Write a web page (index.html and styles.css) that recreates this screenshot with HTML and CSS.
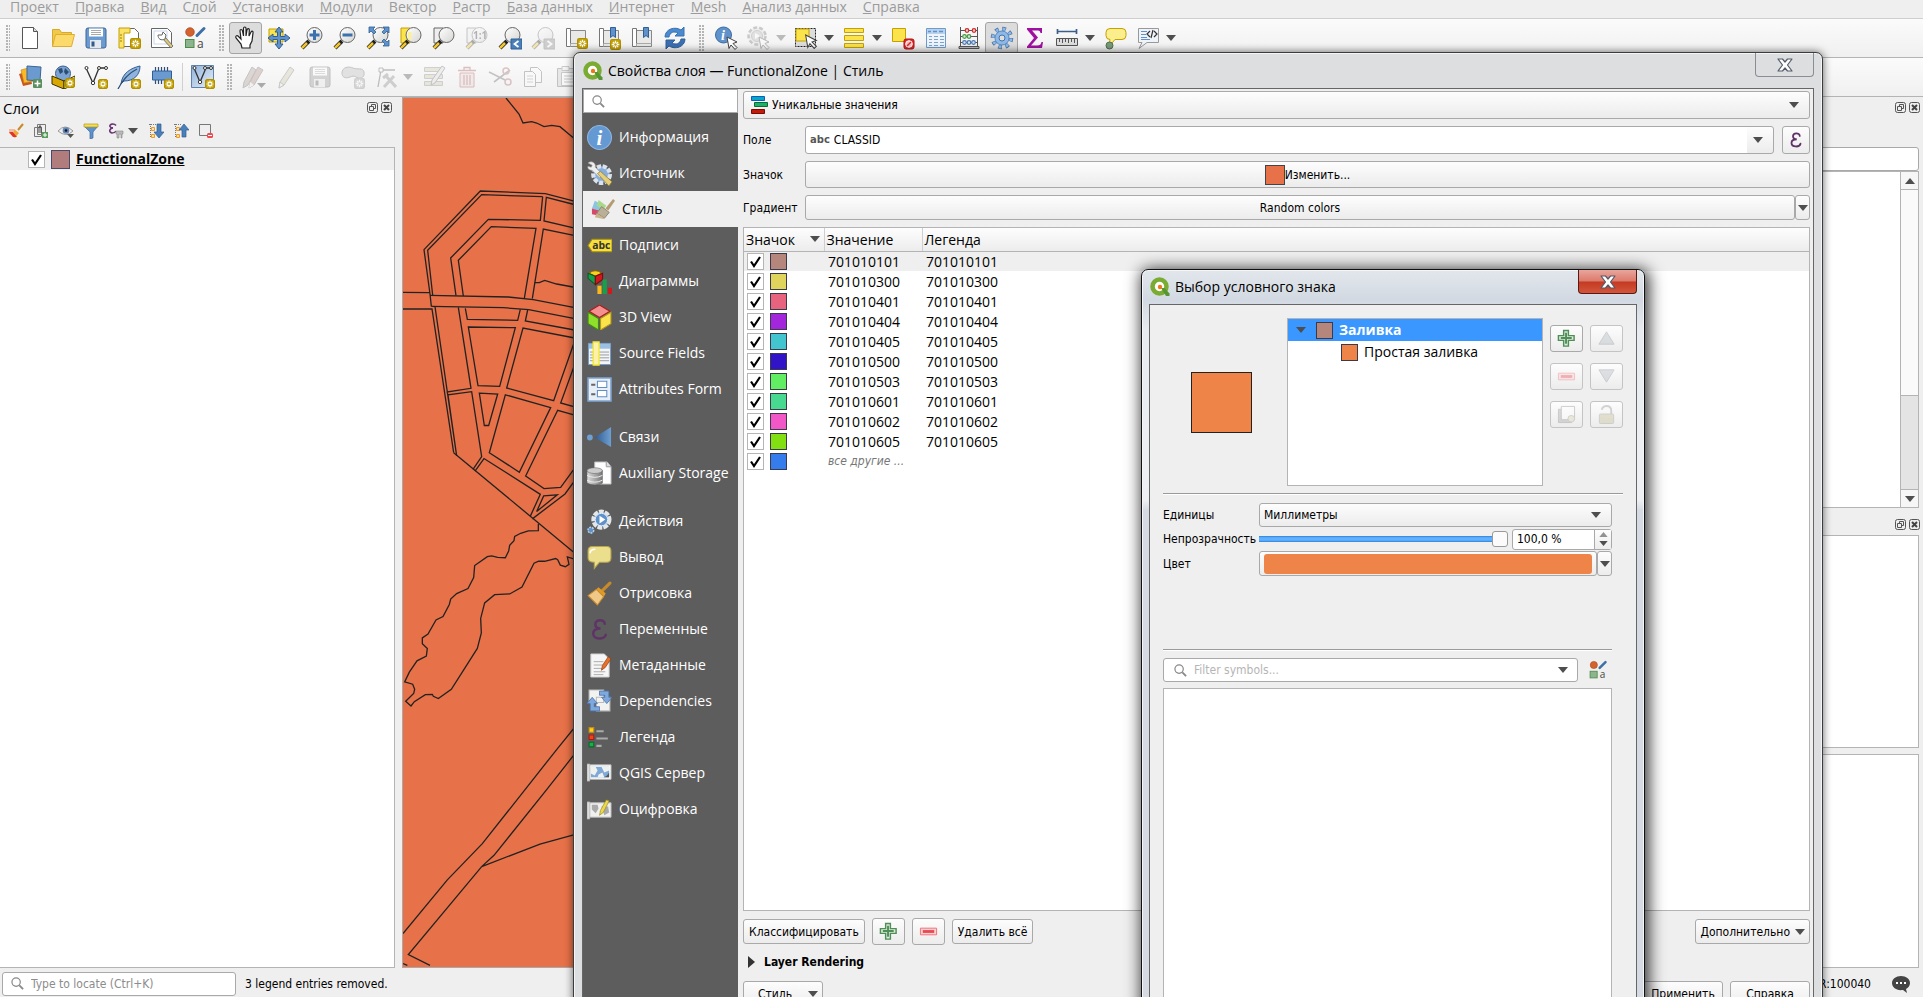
FILE: index.html
```html
<!DOCTYPE html>
<html lang="ru">
<head>
<meta charset="utf-8">
<title>QGIS</title>
<link rel="stylesheet" href="styles.css">
</head>
<body>
<svg class="defs" aria-hidden="true">
  <defs>
    <linearGradient id="g-lens" x1="0" y1="0" x2="1" y2="1"><stop offset="0" stop-color="#fff"/><stop offset="1" stop-color="#d4d6d2"/></linearGradient>
    <linearGradient id="g-cyl" x1="0" y1="0" x2="1" y2="0"><stop offset="0" stop-color="#ddd"/><stop offset="1" stop-color="#777"/></linearGradient>
    <linearGradient id="g-blue" x1="0" y1="0" x2="1" y2="1"><stop offset="0" stop-color="#8fb3dc"/><stop offset="1" stop-color="#e8eef6"/></linearGradient>
    <linearGradient id="g-tri" x1="0" y1="0" x2="1" y2="0"><stop offset="0" stop-color="#2f5a90"/><stop offset="1" stop-color="#6fa0d2"/></linearGradient>
  </defs>
  <symbol id="star" viewBox="0 0 10 10"><rect x=".5" y=".5" width="9" height="9" rx="1.5" fill="#c4a000" stroke="#b08f00"/><path d="M5 1.5v7M1.5 5h7M2.6 2.6l4.8 4.8M7.4 2.6L2.6 7.4" stroke="#fff" stroke-width="1.2"/><circle cx="5" cy="5" r="1.1" fill="#c4a000"/></symbol>
  <symbol id="down" viewBox="0 0 10 6"><path d="M0 0h10L5 6z" fill="#4e4e4e"/></symbol>
  <symbol id="qgis" viewBox="0 0 20 20"><circle cx="9.500" cy="9.500" r="7" fill="#fff" stroke="#7aab32" stroke-width="4.500"/><path d="M11 11h3.500l5 5.500v2.500h-3.500z" fill="#589632"/><circle cx="10" cy="10" r="2.200" fill="#ee7913"/></symbol>
  <symbol id="search" viewBox="0 0 14 14"><circle cx="5.500" cy="5.500" r="4.500" fill="none" stroke="#888" stroke-width="1.300"/><path d="M9 9l4 4" stroke="#888" stroke-width="2"/></symbol>
  <symbol id="new" viewBox="0 0 24 24"><path d="M4.500 1.500h11l4 4v17h-15z" fill="#fff" stroke="#555"/><path d="M15.500 1.500v4h4" fill="#ddd" stroke="#555"/></symbol>
  <symbol id="folder" viewBox="0 0 24 24"><path d="M1.500 20.500v-17h7l2 3h10v3" fill="#f0c94b" stroke="#d9a92a"/><path d="M1.500 20.500l3-12h19l-3 12z" fill="#fbd96b" stroke="#dfae2d"/></symbol>
  <symbol id="save" viewBox="0 0 24 24"><rect x="2" y="2" width="20" height="20" rx="2" fill="#6b9ad0" stroke="#3b6696"/><path d="M5 2.500h14v8H5z" fill="#fff"/><path d="M7 4.500h10M7 6.500h10M7 8.500h10" stroke="#aaa"/><path d="M6 14h11v8H6z" fill="#e4e9ef"/><path d="M7.500 15.500h3v5h-3z" fill="#2f5a8a"/></symbol>
  <symbol id="layout" viewBox="0 0 24 24"><path d="M2.500 2.500h15l4 4v14h-19z" fill="#fff" stroke="#666"/><path d="M2 2h11v5H7v15H2z" fill="#fbe36a" stroke="#c4a000"/><path d="M5 9H3M5 12H3M5 15H3" stroke="#9a7d00"/><use href="#star" x="13" y="12" width="11" height="11"/></symbol>
  <symbol id="wrenchdoc" viewBox="0 0 24 24"><path d="M1.500 2.500h16l4 4v15h-20z" fill="#fff" stroke="#666"/><path d="M4 5h13v13H4z" fill="none" stroke="#c9d6ee"/><path d="M12 12l9 10 2-2-8-9z" fill="#dcc873" stroke="#777"/><path d="M8 9c0 4 3 6 7 4l1-4-3-3-1 3-2 0z" fill="#fff" stroke="#666"/></symbol>
  <symbol id="style" viewBox="0 0 24 24"><circle cx="7" cy="6" r="4.300" fill="#d4622f" stroke="#a8441a" stroke-width=".7"/><rect x="2.500" y="13.500" width="8.500" height="8" fill="#8db58d" stroke="#4e8a4e"/><path d="M14 9.500l7-7" stroke="#3e6fa6" stroke-width="3" stroke-linecap="round"/></symbol>
  <symbol id="hand" viewBox="0 0 24 24"><path d="M8 22l-1-4-5-6c-1-2 1-3 2-2l3 3-1-8c0-2 2-2 2.500 0l1 5V2.500c0-2 2.500-2 2.500 0V10l1-6c.5-2 2.500-1.500 2.300 0L15 10l2-4c1-1.500 2.500-.5 2 1l-1 8-2 4v3z" fill="#fff" stroke="#222" stroke-width="1.200"/></symbol>
  <symbol id="pan" viewBox="0 0 24 24"><path d="M2 3h14v13H2z" fill="#fbe34c" stroke="#c4a000"/><path d="M12 1l4 5h-2.500v4.500H18V8l5 4-5 4v-2.500h-4.500V18H16l-4 5-4-5h2.500v-4.500H6V16l-5-4 5-4v2.500h4.500V6H8z" fill="#5f92cb" stroke="#2f5f96"/></symbol>
  <symbol id="lens" viewBox="0 0 24 24"><path d="M9 15l-7 7" stroke="#222" stroke-width="4"/><path d="M7 17l-5 5" stroke="#f3c62b" stroke-width="2.500"/><circle cx="14.500" cy="9" r="7.500" fill="url(#g-lens)" stroke="#666"/></symbol>
  <symbol id="zin" viewBox="0 0 24 24"><use href="#lens"/><path d="M14.500 4v10M9.500 9h10" stroke="#3c71ad" stroke-width="3"/></symbol>
  <symbol id="zout" viewBox="0 0 24 24"><use href="#lens"/><path d="M9.500 9h10" stroke="#3c71ad" stroke-width="3"/></symbol>
  <symbol id="zfull" viewBox="0 0 24 24"><use href="#lens"/><path d="M3 1h6L7 3l3 3-2 2-3-3-2 2zM23 1h-6l2 2-3 3 2 2 3-3 2 2zM23 20h-6l2-2-3-3 2-2 3 3 2-2z" fill="#5f92cb" stroke="#2f5f96" stroke-width=".8"/></symbol>
  <symbol id="zsel" viewBox="0 0 24 24"><path d="M2 2h9v15H2z" fill="#fbe34c" stroke="#c4a000"/><use href="#lens"/><path d="M8.500 6h4v8h-3z" fill="#fbf0a0"/></symbol>
  <symbol id="zlay" viewBox="0 0 24 24"><path d="M2 2h9v15H2z" fill="#eee" stroke="#666"/><use href="#lens"/></symbol>
  <symbol id="zlast" viewBox="0 0 24 24"><use href="#lens"/><path d="M13 13h11v10H13z" fill="#4b7fb9" stroke="#2f5f96"/><path d="M20.500 15l-4 3 4 3" fill="none" stroke="#fff" stroke-width="1.800"/></symbol>
  <symbol id="znext" viewBox="0 0 24 24"><use href="#lens"/><path d="M13 13h11v10H13z" fill="#888" stroke="#666"/><path d="M16.500 15l4 3-4 3" fill="none" stroke="#fff" stroke-width="1.800"/></symbol>
  <symbol id="map" viewBox="0 0 24 24"><path d="M4 4.500h17.500v16H4z" fill="#e9e9e7" stroke="#888"/><path d="M2.500 2.500h4v18h-4z" fill="#fff" stroke="#777"/><path d="M6.500 20.500v-3h15" fill="none" stroke="#aaa"/></symbol>
  <symbol id="mapnew" viewBox="0 0 24 24"><use href="#map"/><use href="#star" x="13" y="12" width="11" height="11"/></symbol>
  <symbol id="bm" viewBox="0 0 24 24"><use href="#map"/><path d="M13.500 1.500h5v10l-2.500-2-2.500 2z" fill="#5f92cb" stroke="#2f5f96"/></symbol>
  <symbol id="bmnew" viewBox="0 0 24 24"><use href="#bm"/><use href="#star" x="13" y="13" width="11" height="11"/></symbol>
  <symbol id="refresh" viewBox="0 0 24 24"><path d="M2 11C2 3 12 0 18 4l3-3v9h-9l3-3c-4-2-8-1-9 4z" fill="#4b8ad0" stroke="#3a70b0"/><path d="M22 13c0 8-10 11-16 7l-3 3v-9h9l-3 3c4 2 8 1 9-4z" fill="#3b6fb2" stroke="#2f5f96"/></symbol>
  <symbol id="cursor" viewBox="0 0 12 14"><path d="M1 1l10 5-4 1.500 4 4-2 2-4-4.500-2 3.500z" fill="#fff" stroke="#444"/></symbol>
  <symbol id="gear" viewBox="0 0 24 24"><circle cx="12" cy="12" r="9" fill="none" stroke="#4473a8" stroke-width="4.500" stroke-dasharray="3.500 3.570"/><circle cx="12" cy="12" r="9" fill="none" stroke="#8db8e8" stroke-width="3" stroke-dasharray="2.500 4.570" stroke-dashoffset="-.5"/><circle cx="12" cy="12" r="7" fill="#8db8e8" stroke="#5a8cc4"/><circle cx="12" cy="12" r="3" fill="#dedede" stroke="#4473a8"/></symbol>
  <symbol id="action" viewBox="0 0 24 24"><circle cx="11" cy="10" r="8.500" fill="#ddd" stroke="#777" stroke-width="2.500" stroke-dasharray="4 2"/><circle cx="11" cy="10" r="5.500" fill="#bbb" stroke="#888"/><path d="M9 7l5 3-5 3z" fill="#fff"/><use href="#cursor" x="12" y="10" width="12" height="14"/></symbol>
  <symbol id="select" viewBox="0 0 24 24"><path d="M1.500 2.500h20v18h-20z" fill="#ddd" stroke="#222" stroke-dasharray="2 1"/><path d="M2 3h13v12H2z" fill="#fbe34c" stroke="#c4a000"/><use href="#cursor" x="10" y="8" width="14" height="15"/></symbol>
  <symbol id="bars" viewBox="0 0 24 24"><path d="M2.500 2.500h19v4h-19zM2.500 9.500h19v5h-19zM2.500 17.500h19v4h-19z" fill="#fbe34c" stroke="#c4a000"/></symbol>
  <symbol id="desel" viewBox="0 0 24 24"><path d="M1.500 2.500h13v13h-13z" fill="#fbe34c" stroke="#c4a000"/><rect x="13" y="13" width="10" height="10" rx="2" fill="#dd2a2a" stroke="#b01010"/><circle cx="18" cy="18" r="3.300" fill="#f6c0c0" stroke="#fff"/><path d="M16 20l4-4" stroke="#dd2a2a" stroke-width="1.500"/></symbol>
  <symbol id="table" viewBox="0 0 24 24"><path d="M2.500 2.500h19v19h-19z" fill="#eef4fa" stroke="#6f9bcb"/><path d="M3 3h18v5H3z" fill="#b9d2ee"/><path d="M4 5.500h3M9 5.500h4M15 5.500h4" stroke="#5f92cb" stroke-width="1.500"/><path d="M5 10.500h3M10 10.500h4M16 10.500h4M5 13.500h3M10 13.500h4M16 13.500h4M5 16.500h3M10 16.500h4M16 16.500h4M5 19.500h3M10 19.500h4M16 19.500h4" stroke="#7aa3d0"/></symbol>
  <symbol id="abacus" viewBox="0 0 24 24"><path d="M3.500 1v20M20.500 1v20M4 4.500h16M4 10.500h16M4 16.500h16" stroke="#555" fill="none"/><path d="M2 20.500h20v2H2z" fill="#bbb" stroke="#555"/><g stroke-width="1.200"><g fill="#f6caca" stroke="#d02a2a"><circle cx="10" cy="4.500" r="1.800"/><circle cx="17" cy="4.500" r="1.800"/></g><g fill="#cfe8cf" stroke="#4a9a4a"><circle cx="7.500" cy="10.500" r="1.800"/><circle cx="12" cy="10.500" r="1.800"/></g><g fill="#d5e4f5" stroke="#4a78b0"><circle cx="7.500" cy="16.500" r="1.800"/><circle cx="12" cy="16.500" r="1.800"/><circle cx="16.500" cy="16.500" r="1.800"/></g></g></symbol>
  <symbol id="sigma" viewBox="0 0 24 24"><path d="M4 2h15v5h-1.500c-.5-2-1-2.500-4-2.500H9l6 7-7 8h6c3 0 4-1 4.500-3.500H20L19 22H4v-1.500l7-8.500L4 3.500z" fill="#a010a0"/></symbol>
  <symbol id="ruler" viewBox="0 0 24 24"><path d="M2 5.500h20M2.500 3v5M21.500 3v5" stroke="#3b5f8a" stroke-width="1.700"/><path d="M1.500 12.500h21v7h-21z" fill="#ddd" stroke="#555"/><path d="M4.500 13v3M7.500 13v4M10.500 13v3M13.500 13v4M16.500 13v3M19.500 13v4" stroke="#555"/></symbol>
  <symbol id="bubble" viewBox="0 0 24 24"><path d="M6 2.500h12q4 0 4 4v3q0 4-4 4h-7l-6 7 1-7q-4 0-4-4v-3q0-4 4-4z" fill="#fbee8c" stroke="#c4a000"/></symbol>
  <symbol id="tip" viewBox="0 0 24 24"><use href="#bubble"/><circle cx="5.500" cy="19.500" r="3.500" fill="#7a9c7a" stroke="#4e6e4e"/></symbol>
  <symbol id="annot" viewBox="0 0 24 24"><path d="M2.500 2.500h20v14H11l-8 6 3-6H2.500z" fill="#f0f4f8" stroke="#999"/><path d="M5 5.500h6M5 8.500h5M5 11.500h6M5 13.500h9" stroke="#5f92cb" stroke-width="1.200"/><path d="M14 5l-3 3 3 3M18 5l3 3-3 3M17 4l-2 8" fill="none" stroke="#333" stroke-width="1.200"/></symbol>
  <symbol id="addlayer" viewBox="0 0 24 24"><path d="M1 9l10-3 3 13-9 2z" fill="#c8571e"/><path d="M3 5l11-3 2 14-10 2z" fill="#fbb829" stroke="#c98a10" stroke-width=".7"/><path d="M9 1l14 1-1 14-13-1z" fill="#6b9ad0" stroke="#3b6696"/><rect x="15" y="14" width="9" height="9" rx="1" fill="#5a8f5e"/><path d="M19.500 15.500v6M16.500 18.500h6" stroke="#fff" stroke-width="1.500"/></symbol>
  <symbol id="globebox" viewBox="0 0 24 24"><circle cx="12" cy="8.500" r="7.500" fill="#7ba4d4" stroke="#3b5f8a"/><path d="M7 4l4-1 1 4-3 2zM14 3l4 4-3 3-2-3z" fill="#2d4d73"/><path d="M1 11l12 5v8L1 19z" fill="#d9a800" stroke="#3d3000"/><path d="M13 16l11-5v8l-11 5z" fill="#fff25c" stroke="#3d3000"/><use href="#star" x="14" y="13" width="10" height="10"/></symbol>
  <symbol id="vnew" viewBox="0 0 24 24"><path d="M2 3l7 15 6-15h8" fill="none" stroke="#333" stroke-width="1.300"/><g fill="#fff" stroke="#333"><circle cx="2.500" cy="3" r="1.500"/><circle cx="15" cy="3" r="1.500"/><circle cx="22" cy="3" r="1.500"/><circle cx="9" cy="18" r="1.700"/></g><use href="#star" x="14" y="14" width="10" height="10"/></symbol>
  <symbol id="feather" viewBox="0 0 24 24"><path d="M4 19C5 8 14 3 23 1c0 9-6 15-16 15z" fill="#8fb3dc" stroke="#2f5f96"/><path d="M1 24C6 14 12 8 20 4" fill="none" stroke="#2f4f76" stroke-width="1.300"/><use href="#star" x="14" y="14" width="10" height="10"/></symbol>
  <symbol id="chip" viewBox="0 0 24 24"><path d="M5.500 2v17M8.500 2v17M11.500 2v17M14.500 2v17M17.500 2v17" stroke="#2f4f76" stroke-width="1.200"/><path d="M2.500 6h19v9h-19z" fill="#6b9ad0" stroke="#2f5f96"/><use href="#star" x="14" y="14" width="10" height="10"/></symbol>
  <symbol id="vbox" viewBox="0 0 24 24"><path d="M.5.500h22v22H.500z" fill="url(#g-blue)" stroke="#5f82aa"/><path d="M3 3l6 14 6-14h6" fill="none" stroke="#333" stroke-width="1.300"/><g fill="#fff" stroke="#333"><circle cx="3.500" cy="3" r="1.500"/><circle cx="14" cy="3" r="1.500"/><circle cx="20" cy="3" r="1.500"/><circle cx="9" cy="17" r="1.700"/></g><use href="#star" x="14" y="14" width="10" height="10"/></symbol>
  <symbol id="pencil" viewBox="0 0 24 24"><path d="M4 23l1-6L15 2l4 3L9 20z" fill="#cfcaa8" stroke="#777"/><path d="M4 23l1-6 4 3z" fill="#eee" stroke="#777"/></symbol>
  <symbol id="pencils" viewBox="0 0 24 24"><path d="M1 23l1-6L10 2l4 3L6 20z" fill="#b09a92" stroke="#666"/><path d="M7 23l1-6L16 2l5 3-9 15z" fill="#b08a82" stroke="#666"/><path d="M7 23l1-6 4 3z" fill="#eee"/><path d="M15 18h9l-4.500 5z" fill="#222"/></symbol>
  <symbol id="blob" viewBox="0 0 24 24"><path d="M1 8C1 2 8 1 12 3s10-1 11 4-3 7-6 6-3-3-8-1-8 0-8-4z" fill="#bbb" stroke="#666"/><use href="#star" x="13" y="13" width="11" height="11"/></symbol>
  <symbol id="nodes" viewBox="0 0 24 24"><path d="M5 22L8 5h14" fill="none" stroke="#555" stroke-width="1.300"/><path d="M6 3h4v4H6z" fill="#fff" stroke="#555"/><path d="M11 22L21 11M12 10l11 12M10 13l5-4" stroke="#888" stroke-width="3"/></symbol>
  <symbol id="editrows" viewBox="0 0 24 24"><path d="M2.500 2.500h18v4h-18zM2.500 9.500h18v4h-18zM2.500 16.500h18v4h-18z" fill="#cfcaa8" stroke="#888"/><path d="M9 20l1-5L20 1l3 2-10 15z" fill="#ddd" stroke="#666"/></symbol>
  <symbol id="trash" viewBox="0 0 24 24"><path d="M5 8h14v14H5z" fill="#ecd6d6" stroke="#a55"/><path d="M3 5.500h18M9 5V2.500h6V5M9 10v10M12 10v10M15 10v10" fill="none" stroke="#a55" stroke-width="1.300"/></symbol>
  <symbol id="cut" viewBox="0 0 24 24"><path d="M1 7l16 8M6 17L22 5" stroke="#666" stroke-width="1.600"/><circle cx="20" cy="17" r="3" fill="none" stroke="#a66" stroke-width="1.500"/><circle cx="18" cy="6" r="3" fill="none" stroke="#a66" stroke-width="1.500"/></symbol>
  <symbol id="copy" viewBox="0 0 24 24"><path d="M9.500 2.500h7l4 4v11h-11z" fill="#fff" stroke="#666"/><path d="M3.500 6.500h8l3 3v12h-11z" fill="#fff" stroke="#666"/><path d="M6 11h6M6 14h6M6 17h6" stroke="#999"/></symbol>
  <symbol id="paste" viewBox="0 0 24 24"><path d="M3.500 3.500h17v18h-17z" fill="#ccc" stroke="#666"/><path d="M7.500 7.500h14v13h-14z" fill="#fff" stroke="#777"/><path d="M8 1.500h7v4H8zM10 11h9M10 14h9M10 17h9" fill="#eee" stroke="#777"/></symbol>
  <symbol id="brush" viewBox="0 0 16 16"><path d="M10 7l5-6" stroke="#c98a2a" stroke-width="2"/><path d="M6 6l5 4-4 5-6-5z" fill="#f0a638"/><path d="M1 9l4 5 4 0-6-7z" fill="#d33"/><path d="M1 6h5v3H1z" fill="#f4b9a0"/></symbol>
  <symbol id="addgroup" viewBox="0 0 16 16"><path d="M1.500 4.500h7v9h-7zM4.500 1.500h8v10h-8z" fill="none" stroke="#777"/><path d="M8 10V4q-1-3-2 0v6" fill="none" stroke="#444"/><rect x="9" y="9" width="6" height="6" fill="#5a9a5a"/><path d="M12 10v4M10 12h4" stroke="#fff"/></symbol>
  <symbol id="eye" viewBox="0 0 16 16"><path d="M0 8q7-8 15 0-7 7-15 0z" fill="#eee" stroke="#999"/><circle cx="8" cy="7.500" r="3.300" fill="#5f86b5"/><circle cx="8" cy="7.500" r="1.300" fill="#112"/><path d="M9 11h7l-3.500 4z" fill="#555"/></symbol>
  <symbol id="funnel" viewBox="0 0 16 16"><path d="M1 3h14l-5 6v6l-3 1V9z" fill="#5f92cb" stroke="#3b6ba5" stroke-width=".7"/><path d="M1 1h14v3H1z" fill="#f5de52" stroke="#b59a1a" stroke-width=".7"/></symbol>
  <symbol id="epsf" viewBox="0 0 16 16"><path d="M8 2.500C6 0 1 1 2 3.500c.5 1.300 2 1.400 3 1.400C2 5 0 9 4 10q3 0 4-2" fill="none" stroke="#6a3574" stroke-width="1.600"/><path d="M8 8h7v3h-1v4h-1v-4h-2v4h-2v-4h-1z" fill="#bbb" stroke="#888" stroke-width=".6"/></symbol>
  <symbol id="expand" viewBox="0 0 16 16"><path d="M1 1.500h7M2.500 1v13" stroke="#777" stroke-dasharray="1 1"/><path d="M3.500 4.500h3v3h-3zM3.500 11.500h3v3h-3z" fill="#ffe0b0" stroke="#f09a20"/><path d="M9 1h4v8h3l-5 6-5-6h3z" fill="#4b7fb9" stroke="#2f5f96" stroke-width=".7"/></symbol>
  <symbol id="collapse" viewBox="0 0 16 16"><path d="M1 1.500h7M2.500 1v13" stroke="#777" stroke-dasharray="1 1"/><path d="M3.500 4.500h3v3h-3zM3.500 11.500h3v3h-3z" fill="#ffe0b0" stroke="#f09a20"/><path d="M9 14h4V7h3l-5-6-5 6h3z" fill="#4b7fb9" stroke="#2f5f96" stroke-width=".7"/></symbol>
  <symbol id="remove" viewBox="0 0 16 16"><path d="M1.500 1.500h11v11h-11z" fill="none" stroke="#777"/><rect x="9" y="10" width="6" height="5" rx="1.500" fill="#ee4a50"/><path d="M10 12.500h4" stroke="#fff"/></symbol>
  <symbol id="float" viewBox="0 0 11 11"><rect x=".5" y=".5" width="10" height="10" rx="2" fill="#eee" stroke="#555"/><path d="M4.500 2.500h4v4h-4z" fill="none" stroke="#555"/><path d="M2.500 4.500h4v4h-4z" fill="#eee" stroke="#555"/></symbol>
  <symbol id="close" viewBox="0 0 11 11"><rect x=".5" y=".5" width="10" height="10" rx="2" fill="#eee" stroke="#555"/><path d="M3 3l5 5M8 3L3 8" stroke="#444" stroke-width="2"/></symbol>
  <symbol id="winx" viewBox="0 0 16 14"><path d="M1 1h4.500L8 4l2.500-3H15l-4.500 6L15 13h-4.500L8 10l-2.500 3H1l4.500-6z" fill="#fff" stroke="#555a68" stroke-width="1.200" stroke-linejoin="round"/></symbol>
  <symbol id="plus" viewBox="0 0 20 20"><path d="M7 1.500h5v5.500h6v5h-6v6H7v-6H1.500V7H7z" fill="#dcebdc" stroke="#4f8f57" stroke-width="1.500"/><path d="M9.500 4v11.500M4 9.500h11.500" stroke="#4f8f57" stroke-width="2"/></symbol>
  <symbol id="minus" viewBox="0 0 20 20"><path d="M1.500 6.500h17v7h-17z" fill="#fbd0d0" stroke="#f07078"/><path d="M4 10h12" stroke="#e64a55" stroke-width="3"/></symbol>
  <symbol id="s-src" viewBox="0 0 24 24"><circle cx="14" cy="13" r="8" fill="#87aedb" stroke="#dde3ea" stroke-width="4" stroke-dasharray="4 1.500"/><path d="M1 2c3-3 8 0 7 4l7 7-3 3-7-7C2 9 0 7 1 5l3 1 1-2z" fill="#eee" stroke="#999" stroke-width=".6"/><path d="M10 12l3-2 11 10-3 4z" fill="#e6cf7a" stroke="#8d7a30" stroke-width=".7"/></symbol>
  <symbol id="s-style" viewBox="0 0 26 24"><path d="M5 3l8 4-4 7-7-3z" fill="#8ac6e2"/><path d="M9 2l8 6-3 4-7-4z" fill="#a8d88a"/><path d="M2 11l7 2 4 6-11-2z" fill="#d8486a"/><path d="M16 11l8-10 2 2-7 10z" fill="#b59a72"/><path d="M12 9l8 6-5 6-8-5z" fill="#bab098" stroke="#8e8570"/><path d="M7 16l8 5-1 1-9-2z" fill="#c8b78e"/></symbol>
  <symbol id="s-diag" viewBox="0 0 24 24"><path d="M8 7L2 4a8 7 0 0 1 12 0z" fill="#fbd21a" stroke="#8a6500"/><path d="M8 7L1 4v5l7 6z" fill="#17a04a" stroke="#0b5a28"/><path d="M8 7l7-3v6l-7 5z" fill="#d1181e" stroke="#7a0a0e"/><path d="M10 16h4v8h-4z" fill="#fbb81a"/><path d="M15 10h4v14h-4z" fill="#17a04a"/><path d="M20 18h4v6h-4z" fill="#d1181e"/></symbol>
  <symbol id="s-3d" viewBox="0 0 24 24"><path d="M12 0l10 6-10 6L2 6z" fill="#f39090" stroke="#b01818"/><path d="M1 7l10 6v11L1 18z" fill="#8ee02a" stroke="#3f8a10"/><path d="M13 13l10-6v11l-10 6z" fill="#fbe34c" stroke="#b59a1a"/></symbol>
  <symbol id="s-fields" viewBox="0 0 24 26"><path d="M.5 2.500h23v22H.500z" fill="#f2f6fa" stroke="#6f9bcb"/><path d="M1 3h22v5H1z" fill="#9cc0e4"/><path d="M2 11.500h20M2 14.500h20M2 17.500h20M2 20.500h20" stroke="#999"/><path d="M5.500 1h6v24h-6z" fill="#fff2a8" stroke="#f5e83c" stroke-width="1.500"/></symbol>
  <symbol id="s-form" viewBox="0 0 24 24"><path d="M1 1h22v22H1z" fill="#e8eef5" stroke="#7fa6d2" stroke-width="1.500"/><path d="M10 4h9v6h-9zM10 13h9v6h-9z" fill="#fff" stroke="#5f8fc6"/><path d="M4 7.500h4M4 16.500h4" stroke="#666" stroke-width="2"/></symbol>
  <symbol id="s-join" viewBox="0 0 26 24"><circle cx="3" cy="12" r="3" fill="#6fa0d2"/><path d="M8 12L25 1v21z" fill="url(#g-tri)"/></symbol>
  <symbol id="s-aux" viewBox="0 0 26 26"><path d="M8 1h13l4 5v18H8z" fill="#fff" stroke="#bbb"/><path d="M20 1v5h5" fill="#ddd" stroke="#999"/><path d="M0 10h16v13q-8 4-16 0z" fill="url(#g-cyl)" stroke="#555" stroke-width=".6"/><path d="M0 15q8 4 16 0M0 20q8 4 16 0" fill="none" stroke="#eee"/><ellipse cx="8" cy="10" rx="8" ry="3" fill="#ccc" stroke="#666" stroke-width=".6"/></symbol>
  <symbol id="s-act" viewBox="0 0 26 26"><circle cx="15" cy="11" r="8.500" fill="#5f92cb" stroke="#e4e6e8" stroke-width="4" stroke-dasharray="5 1.200"/><circle cx="15" cy="11" r="6.500" fill="#5f92cb" stroke="#eee"/><path d="M13 7l6 4-6 4z" fill="#fff"/><circle cx="4" cy="22" r="3" fill="#5f92cb" stroke="#bcd0e6" stroke-width="1.500" stroke-dasharray="2 1"/></symbol>
  <symbol id="s-out" viewBox="0 0 24 24"><path d="M5 1.500h14q4 0 4 4v7q0 4-4 4h-7l-5 6 0-6q-6 0-6-4v-7q0-4 4-4z" fill="#ebdf8d" stroke="#b5a54c"/><path d="M3 8q0-4 5-4" fill="none" stroke="#fff" stroke-width="1.500"/></symbol>
  <symbol id="s-rend" viewBox="0 0 24 24"><path d="M14 10l8-8" stroke="#c98a2a" stroke-width="3" stroke-linecap="round"/><path d="M11 6l7 6-2 3-7-7z" fill="#e09a28"/><path d="M1 14l8-6 7 7-6 8z" fill="#f0c888" stroke="#c98a2a"/></symbol>
  <symbol id="eps" viewBox="0 0 24 24"><path d="M17 6.500C17 2 8 2 8 7 8 10 10 11 13 11 8 11 6 13 6 16 6 22 17 22 18 17" fill="none" stroke="#5e3466" stroke-width="2.400" stroke-linecap="round"/></symbol>
  <symbol id="s-meta" viewBox="0 0 26 26"><path d="M4 1h14l5 5v19H4z" fill="#f6f6f6" stroke="#ccc"/><path d="M7 9h10M7 12.500h10M7 16h10M7 19.500h12M7 22.500h10" stroke="#aaa"/><path d="M15 18l1-5 6-9 3 2-6 9z" fill="#e8702a" stroke="#8d3c10" stroke-width=".7"/></symbol>
  <symbol id="s-dep" viewBox="0 0 24 24"><path d="M2 1h14v12H2zM9 8h13v13H9z" fill="#f2f2f0" stroke="#bbb"/><path d="M12 2h9v6h3l-5 6-5-6h3V6h-5z" fill="#7fa8dc" stroke="#4a76b0" stroke-width=".8"/><path d="M5 8l5 6H7v3h5v4H3v-7H0z" fill="#7fa8dc" stroke="#4a76b0" stroke-width=".8"/></symbol>
  <symbol id="s-leg" viewBox="0 0 24 24"><path d="M2 2.500h4.500v4.500H2z" fill="#fbd21a" stroke="#c98a10"/><path d="M2 9.500h4.500v4.500H2z" fill="#f2440f" stroke="#b01818"/><path d="M2 16.500h4.500v4.500H2z" fill="#17b04a" stroke="#0b6a28"/><path d="M9 6h7M9 13h11M9 20h5" stroke="#aaa" stroke-width="2"/></symbol>
  <symbol id="s-srv" viewBox="0 0 26 22"><path d="M2 2h23v15H2z" fill="#fff" stroke="#bbb"/><path d="M4 4h19v11H4z" fill="#7fa8d6"/><path d="M4 4h5l2 4-3 5-4-2zM15 4h8v4l-5 2zM12 12l4-2 2 5h-7z" fill="#eef1ee"/><path d="M0 1h3v18H0z" fill="#ddd" stroke="#999" stroke-width=".5"/><path d="M17 15q4-1 6-5v5z" fill="#555"/></symbol>
  <symbol id="s-dig" viewBox="0 0 26 22"><path d="M2 4h23v15H2z" fill="#f0f0ee" stroke="#bbb"/><path d="M5 6h6l1 4-3 5-4-4zM15 8h7l1 6-5 3z" fill="#aaa"/><path d="M0 3h3v18H0z" fill="#ddd" stroke="#999" stroke-width=".5"/><path d="M13 17l1-5 6-11 3 1-6 12z" fill="#ecd94c" stroke="#978820" stroke-width=".7"/></symbol>
  <symbol id="cats" viewBox="0 0 18 18"><path d="M.5.500h13v4H.500z" fill="#00a9c4" stroke="#1555c4"/><path d="M3.500 6.500h13v4h-13z" fill="#1bb268" stroke="#0b6a38"/><path d="M.5 13.500h13v4H.500z" fill="#c41a0a" stroke="#7a0a04"/></symbol>
</svg>

<div class="app">
  <nav class="menubar" aria-label="Меню">
    <button>Про<u>е</u>кт</button><button><u>П</u>равка</button><button><u>В</u>ид</button><button>С<u>л</u>ой</button><button><u>У</u>становки</button><button><u>М</u>одули</button><button>Век<u>т</u>ор</button><button><u>Р</u>астр</button><button><u>Б</u>аза данных</button><button><u>И</u>нтернет</button><button><u>M</u>esh</button><button><u>А</u>нализ данных</button><button><u>С</u>правка</button>
  </nav>
  <div class="toolbar">
    <span class="grip first"></span>
    <button aria-label="Создать"><svg><use href="#new"/></svg></button>
    <button aria-label="Открыть"><svg><use href="#folder"/></svg></button>
    <button aria-label="Сохранить"><svg><use href="#save"/></svg></button>
    <button aria-label="Новый макет"><svg><use href="#layout"/></svg></button>
    <button aria-label="Макеты"><svg><use href="#wrenchdoc"/></svg></button>
    <button aria-label="Стили"><svg viewBox="0 0 24 24"><use href="#style"/><text x="14" y="22" class="t12">a</text></svg></button>
    <span class="grip"></span>
    <button class="on" aria-label="Прокрутка"><svg><use href="#hand"/></svg></button>
    <button aria-label="К выделенному"><svg><use href="#pan"/></svg></button>
    <button aria-label="Увеличить"><svg><use href="#zin"/></svg></button>
    <button aria-label="Уменьшить"><svg><use href="#zout"/></svg></button>
    <button aria-label="Полный охват"><svg><use href="#zfull"/></svg></button>
    <button aria-label="Увеличить до выделенного"><svg><use href="#zsel"/></svg></button>
    <button aria-label="Увеличить до слоя"><svg><use href="#zlay"/></svg></button>
    <button class="off" aria-label="Исходный размер"><svg viewBox="0 0 24 24"><use href="#zlay"/><text x="8" y="13" class="t10">1:1</text></svg></button>
    <button aria-label="Предыдущий охват"><svg><use href="#zlast"/></svg></button>
    <button class="off" aria-label="Следующий охват"><svg><use href="#znext"/></svg></button>
    <button aria-label="Новая карта"><svg><use href="#mapnew"/></svg></button>
    <button aria-label="Новая закладка"><svg><use href="#bmnew"/></svg></button>
    <button aria-label="Закладки"><svg><use href="#bm"/></svg></button>
    <button aria-label="Обновить"><svg><use href="#refresh"/></svg></button>
    <span class="grip"></span>
    <button aria-label="Определить"><svg viewBox="0 0 24 24"><circle cx="9.500" cy="9" r="8" fill="#5f92cb" stroke="#3b6ba5"/><text x="7" y="14" class="ti">i</text><use href="#cursor" x="12" y="10" width="12" height="14"/></svg></button>
    <button class="split off" aria-label="Действие"><svg><use href="#action"/></svg><svg class="arr"><use href="#down"/></svg></button>
    <button class="split" aria-label="Выделить"><svg><use href="#select"/></svg><svg class="arr"><use href="#down"/></svg></button>
    <button class="split" aria-label="Выделить по форме"><svg><use href="#bars"/></svg><svg class="arr"><use href="#down"/></svg></button>
    <button aria-label="Снять выделение"><svg><use href="#desel"/></svg></button>
    <button aria-label="Таблица"><svg><use href="#table"/></svg></button>
    <button aria-label="Калькулятор"><svg><use href="#abacus"/></svg></button>
    <button class="on" aria-label="Обработка"><svg><use href="#gear"/></svg></button>
    <button aria-label="Статистика"><svg><use href="#sigma"/></svg></button>
    <button class="split" aria-label="Измерить"><svg><use href="#ruler"/></svg><svg class="arr"><use href="#down"/></svg></button>
    <button aria-label="Подсказки"><svg><use href="#tip"/></svg></button>
    <button class="split" aria-label="Аннотация"><svg><use href="#annot"/></svg><svg class="arr"><use href="#down"/></svg></button>
  </div>
  <div class="toolbar">
    <span class="grip first"></span>
    <button aria-label="Добавить слой"><svg><use href="#addlayer"/></svg></button>
    <button aria-label="GeoPackage"><svg><use href="#globebox"/></svg></button>
    <button aria-label="Shapefile"><svg><use href="#vnew"/></svg></button>
    <button aria-label="SpatiaLite"><svg><use href="#feather"/></svg></button>
    <button aria-label="Временный слой"><svg><use href="#chip"/></svg></button>
    <span class="sep"></span>
    <button aria-label="Виртуальный слой"><svg><use href="#vbox"/></svg></button>
    <span class="grip"></span>
    <button class="off" aria-label="Правки"><svg><use href="#pencils"/></svg></button>
    <button class="off" aria-label="Редактировать"><svg><use href="#pencil"/></svg></button>
    <button class="off gray" aria-label="Сохранить правки"><svg><use href="#save"/></svg></button>
    <button class="off gray" aria-label="Добавить объект"><svg><use href="#blob"/></svg></button>
    <button class="split off" aria-label="Узлы"><svg><use href="#nodes"/></svg><svg class="arr"><use href="#down"/></svg></button>
    <button class="off" aria-label="Изменить атрибуты"><svg><use href="#editrows"/></svg></button>
    <button class="off" aria-label="Удалить"><svg><use href="#trash"/></svg></button>
    <button class="off" aria-label="Вырезать"><svg><use href="#cut"/></svg></button>
    <button class="off" aria-label="Копировать"><svg><use href="#copy"/></svg></button>
    <button class="off" aria-label="Вставить"><svg><use href="#paste"/></svg></button>
  </div>
  <main class="work">
    <section class="layers">
      <header class="dock-title"><h2>Слои</h2><button aria-label="Открепить"><svg><use href="#float"/></svg></button><button aria-label="Закрыть"><svg><use href="#close"/></svg></button></header>
      <div class="minibar">
        <button aria-label="Стиль слоя"><svg><use href="#brush"/></svg></button>
        <button aria-label="Добавить группу"><svg><use href="#addgroup"/></svg></button>
        <button aria-label="Видимость"><svg><use href="#eye"/></svg></button>
        <button aria-label="Фильтр"><svg><use href="#funnel"/></svg></button>
        <button class="wide" aria-label="Фильтр по выражению"><svg><use href="#epsf"/></svg><svg class="arr"><use href="#down"/></svg></button>
        <button aria-label="Развернуть"><svg><use href="#expand"/></svg></button>
        <button aria-label="Свернуть"><svg><use href="#collapse"/></svg></button>
        <button aria-label="Удалить слой"><svg><use href="#remove"/></svg></button>
      </div>
      <div class="tree">
        <label class="layer"><input type="checkbox" class="check" checked><span class="chip"></span><b>FunctionalZone</b></label>
      </div>
    </section>
    <svg class="map" role="img" aria-label="Карта">
      <g class="lines" transform="scale(.33333) translate(-9 -24)">
        <path d="M318 24L357 72 369 99 395 95 410 99 432 110 455 106 480 110 518 142 540 160"/>
        <path d="M540 338L436 311 241 303 72 479 90 612 94 649M9 607L88 608M9 657H96L161 1088"/>
        <path d="M540 348L439 322 432 393 540 418M428 320L245 314 83 481 98 615M428 320L421 391 265 388 152 504 168 617"/>
        <path d="M540 440L430 417 397 626M190 618L175 511 274 410 408 415 373 625"/>
        <path d="M404 578H418L434 571 470 582 519 591 540 594"/>
        <path d="M90 616L325 621 400 629 540 656M94 649L310 653 386 659 540 689"/>
        <path d="M105 650L142 906 213 895 175 652M196 655L202 688 353 691 361 658M205 711L346 713 299 889 234 887zM383 660L376 693 540 723"/>
        <path d="M540 747L369 714 320 894 461 932 540 708M540 780L482 939 540 955"/>
        <g transform="translate(0 870) scale(1 1.167)">
          <path d="M142 31L170 195M170 195L144 38 215 30 245 197 219 230M225 234L252 202 421 294 391 350"/>
          <path d="M238 34L293 36 266 117H253zM316 38L452 71 358 237 268 187zM540 94L473 78 377 247 432 279 482 276 540 208"/>
          <path d="M161 187L540 456M410 338L431 298 472 295zM397 357L495 293 540 240"/>
          <path d="M415 370V387L385 388 362 394 344 402 342 413 329 425 326 440 316 457 293 456 275 452 262 454 224 477 221 508 204 536 170 549 152 563 148 577 129 608 108 617 84 653 67 663V678L82 690 79 710 51 722 28 751 14 776 38 782 44 795 41 806 17 826 33 838 43 827 76 809 97 808 100 813 115 819 154 795 232 690 244 650 242 613 254 573 284 552 329 550 366 532 402 471 416 466 434 466 467 459 473 462 481 476 496 480 507 474 502 455 540 465"/>
          <path d="M540 876L470 950 247 1192 142 1285 9 1423M540 944L440 1053 282 1222 245 1251 25 1477 90 1505M245 1251L420 1193 540 1165M9 1500L22 1505"/>
        </g>
      </g>
    </svg>
    <aside class="right">
      <header class="dock-title"><button aria-label="Открепить"><svg><use href="#float"/></svg></button><button aria-label="Закрыть"><svg><use href="#close"/></svg></button></header>
      <input class="dock-search" type="text" aria-label="Поиск">
      <div class="box tools"><div class="scroll"><button aria-label="Вверх"><svg class="arr up"><use href="#down"/></svg></button><span class="thumb"></span><span class="rest"></span><button aria-label="Вниз"><svg class="arr"><use href="#down"/></svg></button></div></div>
      <header class="dock-title low"><button aria-label="Открепить"><svg><use href="#float"/></svg></button><button aria-label="Закрыть"><svg><use href="#close"/></svg></button></header>
      <div class="box mid"></div>
      <div class="box end"></div>
    </aside>
  </main>
  <footer class="status">
    <label class="field locate"><svg><use href="#search"/></svg><input type="text" aria-label="Поиск" placeholder="Type to locate (Ctrl+K)"></label>
    <span>3 legend entries removed.</span>
    <span class="crs">USER:100040</span>
    <svg class="msg" viewBox="0 0 20 18"><path d="M10 1c5 0 9 3 9 7 0 3-2 5-4 6l1 4-4-3c-7 1-11-3-11-7s4-7 9-7z" fill="#444"/><path d="M5 8h2M9 8h2M13 8h2" stroke="#fff" stroke-width="2"/></svg>
  </footer>
</div>

<section class="window props" aria-label="Свойства слоя">
  <header class="titlebar"><svg><use href="#qgis"/></svg><h1>Свойства слоя — FunctionalZone | Стиль</h1><button class="x" aria-label="Закрыть"><svg><use href="#winx"/></svg></button></header>
  <div class="client">
    <nav class="side">
      <label class="side-search"><svg><use href="#search"/></svg><input type="text" aria-label="Поиск"></label>
      <a href="#"><svg viewBox="0 0 24 24"><circle cx="12" cy="12" r="11.500" fill="#6499d4" stroke="#8fb6e2"/><text x="9" y="19" class="ti big">i</text></svg>Информация</a>
      <a href="#"><svg><use href="#s-src"/></svg>Источник</a>
      <a href="#" class="sel"><svg><use href="#s-style"/></svg>Стиль</a>
      <a href="#"><svg viewBox="0 0 24 24"><path d="M1 12l4-6h19v12H5z" fill="#f8e03a" stroke="#a58f10"/><text x="5" y="15" class="t10">abc</text></svg>Подписи</a>
      <a href="#"><svg><use href="#s-diag"/></svg>Диаграммы</a>
      <a href="#"><svg><use href="#s-3d"/></svg>3D View</a>
      <a href="#"><svg><use href="#s-fields"/></svg>Source Fields</a>
      <a href="#"><svg><use href="#s-form"/></svg>Attributes Form</a>
      <a href="#" class="gap"><svg><use href="#s-join"/></svg>Связи</a>
      <a href="#"><svg><use href="#s-aux"/></svg>Auxiliary Storage</a>
      <a href="#" class="gap"><svg><use href="#s-act"/></svg>Действия</a>
      <a href="#"><svg><use href="#s-out"/></svg>Вывод</a>
      <a href="#"><svg><use href="#s-rend"/></svg>Отрисовка</a>
      <a href="#"><svg><use href="#eps"/></svg>Переменные</a>
      <a href="#"><svg><use href="#s-meta"/></svg>Метаданные</a>
      <a href="#"><svg><use href="#s-dep"/></svg>Dependencies</a>
      <a href="#"><svg><use href="#s-leg"/></svg>Легенда</a>
      <a href="#"><svg><use href="#s-srv"/></svg>QGIS Сервер</a>
      <a href="#"><svg><use href="#s-dig"/></svg>Оцифровка</a>
    </nav>
    <div class="panel">
      <div class="combo renderer"><svg class="ic18"><use href="#cats"/></svg><select aria-label="Тип"><option>Уникальные значения</option></select><svg class="arr"><use href="#down"/></svg></div>
      <div class="form">
        <label for="fld">Поле</label>
        <div class="row"><div class="combo edit"><span class="abc">abc</span><select id="fld"><option>CLASSID</option></select><svg class="arr"><use href="#down"/></svg></div><button class="btn eps" aria-label="Выражение"><svg><use href="#eps"/></svg></button></div>
        <label for="sym">Значок</label>
        <button class="btn sym" id="sym"><span class="dot"></span>Изменить...</button>
        <label for="ramp">Градиент</label>
        <div class="row"><button class="btn ramp" id="ramp">Random colors</button><button class="btn drop" aria-label="Список"><svg class="arr"><use href="#down"/></svg></button></div>
      </div>
      <div class="list">
        <table>
          <thead><tr><th class="c1"><span>Значок<svg class="arr"><use href="#down"/></svg></span></th><th class="c2">Значение</th><th>Легенда</th></tr></thead>
          <tbody>
            <tr class="cur"><td><span><input type="checkbox" class="check" aria-label="701010101" checked><i class="k1"></i></span></td><td>701010101</td><td>701010101</td></tr>
            <tr><td><span><input type="checkbox" class="check" aria-label="701010300" checked><i class="k2"></i></span></td><td>701010300</td><td>701010300</td></tr>
            <tr><td><span><input type="checkbox" class="check" aria-label="701010401" checked><i class="k3"></i></span></td><td>701010401</td><td>701010401</td></tr>
            <tr><td><span><input type="checkbox" class="check" aria-label="701010404" checked><i class="k4"></i></span></td><td>701010404</td><td>701010404</td></tr>
            <tr><td><span><input type="checkbox" class="check" aria-label="701010405" checked><i class="k5"></i></span></td><td>701010405</td><td>701010405</td></tr>
            <tr><td><span><input type="checkbox" class="check" aria-label="701010500" checked><i class="k6"></i></span></td><td>701010500</td><td>701010500</td></tr>
            <tr><td><span><input type="checkbox" class="check" aria-label="701010503" checked><i class="k7"></i></span></td><td>701010503</td><td>701010503</td></tr>
            <tr><td><span><input type="checkbox" class="check" aria-label="701010601" checked><i class="k8"></i></span></td><td>701010601</td><td>701010601</td></tr>
            <tr><td><span><input type="checkbox" class="check" aria-label="701010602" checked><i class="k9"></i></span></td><td>701010602</td><td>701010602</td></tr>
            <tr><td><span><input type="checkbox" class="check" aria-label="701010605" checked><i class="k10"></i></span></td><td>701010605</td><td>701010605</td></tr>
            <tr><td><span><input type="checkbox" class="check" aria-label="все другие" checked><i class="k11"></i></span></td><td class="other">все другие ...</td><td></td></tr>
          </tbody>
        </table>
      </div>
      <div class="row actions">
        <button class="btn">Классифицировать</button>
        <button class="btn sq" aria-label="Добавить"><svg><use href="#plus"/></svg></button>
        <button class="btn sq" aria-label="Убрать"><svg><use href="#minus"/></svg></button>
        <button class="btn">Удалить всё</button>
        <button class="btn push">Дополнительно<svg class="arr"><use href="#down"/></svg></button>
      </div>
      <details class="rendering"><summary><svg viewBox="0 0 7 12"><path d="M0 0l7 6-7 6z" fill="#333"/></svg>Layer Rendering</summary></details>
      <div class="row bottom">
        <button class="btn menu">Стиль<svg class="arr"><use href="#down"/></svg></button>
        <button class="btn push apply">Применить</button>
        <button class="btn help">Справка</button>
      </div>
    </div>
  </div>
</section>

<section class="window symbol" aria-label="Выбор условного знака">
  <header class="titlebar"><svg><use href="#qgis"/></svg><h1>Выбор условного знака</h1><button class="x red" aria-label="Закрыть"><svg><use href="#winx"/></svg></button></header>
  <div class="client">
    <div class="top">
      <div class="preview"><span></span></div>
      <ul class="symtree">
        <li class="sel"><svg class="arr"><use href="#down"/></svg><i class="k1"></i><b>Заливка</b></li>
        <li class="child"><i class="fill"></i>Простая заливка</li>
      </ul>
      <div class="grid">
        <button class="btn sq" aria-label="Добавить"><svg><use href="#plus"/></svg></button>
        <button class="btn sq" disabled aria-label="Вверх"><svg viewBox="0 0 20 20"><path d="M10 3l8 13H2z" fill="#b5bcc4" stroke="#8a9098"/></svg></button>
        <button class="btn sq" disabled aria-label="Убрать"><svg><use href="#minus"/></svg></button>
        <button class="btn sq" disabled aria-label="Вниз"><svg viewBox="0 0 20 20"><path d="M10 16l8-13H2z" fill="#b5bcc4" stroke="#8a9098"/></svg></button>
        <button class="btn sq" disabled aria-label="Дублировать"><svg viewBox="0 0 20 20"><path d="M1.500 4.500h14v14h-14z" fill="#aaa" stroke="#888"/><path d="M4.500 1.500h14v14h-14z" fill="#fff" stroke="#888"/><circle cx="15" cy="14.500" r="3.500" fill="#ddd9b0" stroke="#999"/></svg></button>
        <button class="btn sq" disabled aria-label="Блокировать"><svg viewBox="0 0 20 20"><path d="M5 5q1-4 5-4 5 0 5 5v4" fill="none" stroke="#999" stroke-width="2"/><rect x="2.500" y="9.500" width="15" height="10" rx="1" fill="#c8bf95" stroke="#999"/></svg></button>
      </div>
    </div>
    <hr>
    <div class="opts">
      <label for="units">Единицы</label>
      <div class="combo"><select id="units"><option>Миллиметры</option></select><svg class="arr"><use href="#down"/></svg></div>
      <label for="opac">Непрозрачность</label>
      <div class="row opacity"><input id="opac" type="range" min="0" max="100" value="100"><div class="spin"><input type="text" value="100,0 %" aria-label="Непрозрачность, %"><div><button aria-label="Больше"><svg class="up dim"><use href="#down"/></svg></button><button aria-label="Меньше"><svg><use href="#down"/></svg></button></div></div></div>
      <label for="color">Цвет</label>
      <div class="row"><button class="btn color" id="color" aria-label="Цвет"><span></span></button><button class="btn drop" aria-label="Список"><svg class="arr"><use href="#down"/></svg></button></div>
    </div>
    <hr class="short">
    <div class="row filter"><label class="field"><svg><use href="#search"/></svg><input type="text" placeholder="Filter symbols..." aria-label="Filter symbols"><svg class="arr"><use href="#down"/></svg></label><button class="plain" aria-label="Стили"><svg viewBox="0 0 24 24"><use href="#style"/><text x="14" y="22" class="t12">a</text></svg></button></div>
    <div class="symbols"></div>
  </div>
</section>
</body>
</html>
```
FILE: styles.css
```css
:root {
  --ui: "DejaVu Sans Condensed", "Open Sans", sans-serif;
  --seg: "Open Sans", "Noto Sans", sans-serif;
  --line: #a9a9a9;
  --bg: #efefef;
  --btn: linear-gradient(#fdfdfd, #ececec);
}
* { box-sizing: border-box; }
html, body { height: 100%; margin: 0; overflow: hidden; }
body { position: relative; background: var(--bg); font: 12px/16px var(--ui); color: #000; }
button, input, select { font: inherit; color: inherit; margin: 0; padding: 0; border: 0; background: none; border-radius: 0; outline: 0; }
svg { display: block; flex: none; }
h1, h2 { margin: 0; font: 15px/20px var(--seg); }
i { display: block; flex: none; border: 1px solid #3a3a4a; }
.defs { position: absolute; width: 0; height: 0; }
.arr { width: 10px; height: 6px; }
.up { transform: rotate(180deg); }
.row { display: flex; align-items: center; }
.t12 { font: 12px var(--seg); fill: #444; }
.t10 { font: bold 10px var(--seg); fill: #333; }
.ti { font: italic bold 14px "Liberation Serif", serif; fill: #fff; }
.ti.big { font-size: 20px; }

/* main window */
.app { height: 100%; display: flex; flex-direction: column; }
.menubar { display: flex; gap: 16px; height: 19px; flex: none; padding-left: 10px; overflow: hidden; border-bottom: 1px solid #cfcfcf; font: 14px/14px var(--seg); color: #9b9b9b; }
.menubar button { height: 14px; white-space: nowrap; flex: none; }
.toolbar { display: flex; align-items: center; height: 39px; flex: none; border-bottom: 1px solid #b4b4b4; background: linear-gradient(#fbfbfb, #f0f0f0); }
.toolbar button { width: 33px; height: 32px; display: flex; align-items: center; justify-content: center; flex: none; }
.toolbar svg:not(.arr) { width: 24px; height: 24px; }
.toolbar .split { width: 48px; padding-left: 4px; gap: 6px; justify-content: flex-start; }
.toolbar .on { border: 1px solid #a5a5a5; border-radius: 3px; background: #dcdcdc; }
.off { opacity: .35; }
.gray { filter: grayscale(1); }
.grip { width: 18px; height: 26px; flex: none; background: radial-gradient(circle at 1px 1px, #b5b5b5 1px, transparent 1px) 8px 0 / 3px 3px; background-clip: content-box; padding: 0 5px 0 8px; }
.grip.first { width: 13px; padding: 0 3px 0 5px; background-position: 0 0; }
.sep { width: 1px; height: 28px; margin: 0 3px 0 4px; background: #d0d0d0; }
.work { flex: 1; min-height: 0; display: flex; }
.layers { width: 395px; flex: none; display: flex; flex-direction: column; }
.dock-title { display: flex; align-items: center; justify-content: flex-end; gap: 3px; height: 21px; flex: none; padding: 0 3px; }
.dock-title h2 { margin-right: auto; }
.dock-title svg { width: 11px; height: 11px; }
.minibar { display: flex; height: 26px; margin-bottom: 3px; padding-left: 3px; }
.minibar button { width: 25px; display: flex; align-items: center; justify-content: center; gap: 4px; }
.minibar .wide { width: 40px; }
.minibar svg:not(.arr) { width: 16px; height: 16px; }
.tree { flex: 1; background: #fff; border: 1px solid #b4b4b4; border-left: 0; }
.layer { display: flex; align-items: center; height: 22px; padding-left: 28px; background: var(--bg); font: 14px/20px var(--seg); }
.layer b { text-decoration: underline; }
.chip { width: 19px; height: 19px; margin: 0 6px; border: 1px solid #4a4a68; background: #b07c7c; }
.check { appearance: none; flex: none; width: 17px; height: 17px; border: 1px solid #b5b5b5; background: #fff; }
.check:checked { background: #fff url("data:image/svg+xml,%3Csvg xmlns='http://www.w3.org/2000/svg' viewBox='0 0 15 15'%3E%3Cpath d='M3 7.500L6 12L12 3' fill='none' stroke='%23000' stroke-width='2.200'/%3E%3C/svg%3E"); }
.map { flex: 1; min-width: 0; height: auto; margin-left: 7px; border: 1px solid #a9a9a9; border-width: 1px 0 1px 1px; background: #e77148; overflow: hidden; }
.lines path { fill: none; stroke: #222; stroke-width: 1.3; vector-effect: non-scaling-stroke; }
.right { width: 340px; flex: none; display: flex; flex-direction: column; padding-left: 8px; }
.dock-search { height: 24px; margin: 29px 4px 0 0; flex: none; border: 1px solid var(--line); border-radius: 3px; background: #fff; }
.box { background: #fff; border: 1px solid #b4b4b4; }
.tools { height: 337px; margin-right: 4px; flex: none; display: flex; justify-content: flex-end; }
.scroll { width: 18px; display: flex; flex-direction: column; border-left: 1px solid #b4b4b4; background: #f6f6f6; }
.scroll button { height: 17px; display: flex; align-items: center; justify-content: center; }
.thumb { flex: 219; border: 1px solid #b4b4b4; border-width: 1px 0; background: #fafafa; }
.rest { flex: 99; background: #e4e4e4; border-bottom: 1px solid #b4b4b4; }
.right .low { margin: 6px 0 0; }
.mid { height: 213px; flex: none; margin-right: 4px; }
.end { flex: 1; margin: 6px 4px 0 0; }
.status { display: flex; align-items: center; height: 29px; flex: none; padding: 2px 12px 0 2px; gap: 9px; }
.field { display: flex; align-items: center; background: #fff; border: 1px solid var(--line); border-radius: 3px; }
.field input { flex: 1; min-width: 0; }
.field svg:not(.arr) { width: 13px; height: 13px; margin: 0 7px 0 8px; }
.field input::placeholder { color: #8c8c8c; opacity: 1; }
.locate { width: 234px; height: 24px; }
.crs { margin-left: auto; }
.msg { width: 20px; height: 18px; margin-left: 11px; }

/* windows */
.window { position: absolute; display: flex; flex-direction: column; padding: 0 8px 8px; border: 1px solid #3c3c3c; border-radius: 7px 7px 0 0; background: #dcdee0; box-shadow: inset 0 0 0 1px #f4f5f6, 0 0 8px rgba(0, 0, 0, .6); }
.props { left: 573px; right: 100px; top: 52px; bottom: -23px; }
.symbol { left: 1141px; right: 278px; top: 269px; bottom: -40px; padding: 0 7px 8px; border-color: #111; background: linear-gradient(#e2e7ec, #d3d9e2 30px, #e8ebef 60px, #eef0f3 230px, #d6dbe3 240px); box-shadow: inset 0 0 0 1px #f4f6f8, 2px 2px 16px 2px rgba(0, 0, 0, .8); }
.titlebar { display: flex; align-items: center; height: 35px; flex: none; }
.titlebar > svg { width: 20px; height: 20px; margin: 0 5px 0 1px; }
.titlebar h1 { font: 14px/20px var(--seg); }
.x { width: 59px; height: 24px; margin-left: auto; align-self: flex-start; display: grid; place-items: center; border: 1px solid #8a8d94; border-top: 0; border-radius: 0 0 4px 4px; }
.x svg { width: 16px; height: 14px; }
.x.red { border-color: #5a1a12; background: linear-gradient(#e9a69c, #dc7a6c 48%, #c43a22 52%, #d2563c); }
.client { flex: 1; min-height: 0; display: flex; border: 1px solid #666; background: var(--bg); }
.side { width: 155px; flex: none; background: #5d5d5d; }
.side a { display: flex; align-items: center; gap: 7px; height: 36px; padding-left: 4px; color: #fff; font: 14px/20px var(--seg); text-decoration: none; white-space: nowrap; }
.side a svg { width: 25px; height: 25px; }
.side .sel { background: var(--bg); color: #000; padding-left: 7px; }
.side .gap { margin-top: 12px; }
.side-search { display: flex; align-items: center; height: 24px; margin-bottom: 6px; padding-left: 8px; background: #fff; border: 1px solid var(--line); }
.side-search svg { width: 13px; height: 13px; }
.side-search input { flex: 1; min-width: 0; }
.panel { flex: 1; min-width: 0; display: flex; flex-direction: column; padding: 2px 3px 0 5px; }
.combo { display: flex; align-items: center; flex: 1; min-width: 0; height: 28px; padding: 0 10px 0 4px; border: 1px solid var(--line); border-radius: 3px; background: var(--btn); }
.combo select { appearance: none; flex: 1; min-width: 0; }
.combo.edit { background: linear-gradient(#fff, #fff) left / calc(100% - 26px) 100% no-repeat, var(--btn); }
.combo.renderer { flex: none; padding: 0 10px 0 7px; }
.ic18 { width: 18px; height: 18px; margin-right: 3px; }
.form { display: grid; grid-template-columns: 62px 1fr; align-items: center; row-gap: 7px; margin: 7px 0; }
.abc { margin-right: 4px; font: bold 10px/16px "DejaVu Sans", sans-serif; color: #555; }
.btn { display: flex; align-items: center; justify-content: center; height: 25px; padding: 0 4px; border: 1px solid var(--line); border-radius: 3px; background: var(--btn); white-space: nowrap; }
.btn.eps { width: 28px; height: 28px; margin-left: 8px; }
.btn.eps svg { width: 18px; height: 18px; }
.btn.sym { height: 27px; }
.dot { width: 20px; height: 20px; border: 1px solid #444; background: #e77148; }
.ramp { flex: 1; }
.btn.drop { width: 15px; padding: 0; }
.list { flex: 1; min-height: 0; border: 1px solid #b4b4b4; background: #fff; }
table { width: 100%; border-collapse: collapse; table-layout: fixed; font: 14px/19px var(--seg); }
th { height: 23px; padding: 0 0 0 2px; font-weight: 400; text-align: left; background: var(--btn); border-bottom: 1px solid #b4b4b4; border-right: 1px solid #cfcfcf; }
th:last-child { border-right: 0; }
th span { display: flex; align-items: center; justify-content: space-between; padding-right: 4px; }
.c1 { width: 80px; }
.c2 { width: 98px; }
td { height: 20px; padding: 0 4px; }
td:first-child { padding-left: 3px; }
td span { display: flex; align-items: center; gap: 6px; }
td i { width: 17px; height: 17px; }
.cur { background: var(--bg); }
.other { font: italic 12px/16px var(--ui); color: #777; }
.k1 { background: #b5877c; } .k2 { background: #e0d45c; } .k3 { background: #e8647e; } .k4 { background: #a326dc; }
.k5 { background: #42c5ce; } .k6 { background: #3114c8; } .k7 { background: #62ee62; } .k8 { background: #48d990; }
.k9 { background: #f157c6; } .k10 { background: #82e012; } .k11 { background: #357cec; }
.actions { gap: 7px; margin-top: 7px; }
.actions .btn:not(.sq, .push) { padding: 0 5px; }
.btn.sq { width: 33px; height: 27px; padding: 0; }
.sq svg { width: 19px; height: 19px; }
.push { margin-left: auto; gap: 5px; }
.rendering { margin: 9px 0 11px; font-weight: 700; }
.rendering summary { display: flex; align-items: center; gap: 9px; padding-left: 4px; list-style: none; }
.rendering svg { width: 7px; height: 12px; margin-left: 1px; }
.bottom { margin-bottom: 4px; gap: 7px; }
.btn.menu { width: 80px; justify-content: space-between; padding: 0 4px 0 14px; }
.apply, .help { width: 80px; }

/* symbol window */
.symbol .titlebar { height: 34px; }
.symbol .client { flex-direction: column; padding: 13px 13px 0; }
.top { display: flex; align-items: flex-start; height: 169px; flex: none; }
.preview { flex: 1; align-self: center; padding-left: 28px; }
.preview span { display: block; width: 61px; height: 61px; border: 1px solid #222; background: #ef8449; }
.symtree { width: 256px; height: 168px; margin: 0 7px 0 0; padding: 0; list-style: none; background: #fff; border: 1px solid #b4b4b4; }
.symtree li { display: flex; align-items: center; gap: 6px; height: 22px; font: 14px/20px var(--seg); }
.symtree i { width: 17px; height: 17px; }
.symtree .sel { background: #3997ff; color: #fff; padding-left: 8px; }
.symtree .sel .arr { margin-right: 4px; }
.symtree .child { padding-left: 53px; }
.fill { background: #ef8449; }
.grid { display: grid; grid-template-columns: 33px 33px; gap: 11px 7px; padding-top: 7px; }
.btn:disabled { border-color: #c4c4c4; }
.btn:disabled svg { opacity: .4; }
hr { width: 100%; height: 2px; flex: none; margin: 6px 0 8px; border: 0; border-top: 1px solid #9a9a9a; border-bottom: 1px solid #fff; }
hr.short { width: auto; margin: 73px 11px 7px 0; }
.opts { display: grid; grid-template-columns: 96px 1fr; align-items: center; margin-right: 11px; }
.opts .combo { height: 24px; }
.opacity { height: 24px; gap: 4px; }
.opacity > input { appearance: none; flex: 1; min-width: 0; height: 16px; background: linear-gradient(#2f7fd8, #5fb0ff 30%, #5fb0ff 70%, #2f7fd8) center / 100% 6px no-repeat; }
.opacity > input::-webkit-slider-thumb { appearance: none; width: 16px; height: 16px; border: 1px solid #9a9a9a; border-radius: 3px; background: #fbfbfb; }
.spin { display: flex; width: 100px; height: 21px; border: 1px solid var(--line); border-radius: 3px; background: #fff; }
.spin input { flex: 1; min-width: 0; padding-left: 4px; }
.spin > div { width: 17px; display: flex; flex-direction: column; border-left: 1px solid var(--line); background: var(--btn); }
.spin button { flex: 1; display: grid; place-items: center; }
.spin svg { width: 9px; height: 5px; }
.dim { opacity: .6; }
.btn.color { flex: 1; padding: 2px 4px; }
.color span { flex: 1; height: 20px; border-radius: 3px; background: #ef8449; }
.filter { margin-right: 11px; gap: 6px; }
.filter .field { flex: 1; height: 24px; padding-right: 9px; }
.filter .field svg:not(.arr) { margin-left: 10px; }
.filter .field input::placeholder { color: #b5b5b5; }
.plain { padding: 0 4px; }
.plain svg { width: 20px; height: 20px; }
.symbols { flex: 1; margin: 6px 11px 12px 0; border: 1px solid #b4b4b4; background: #fff; }
```
